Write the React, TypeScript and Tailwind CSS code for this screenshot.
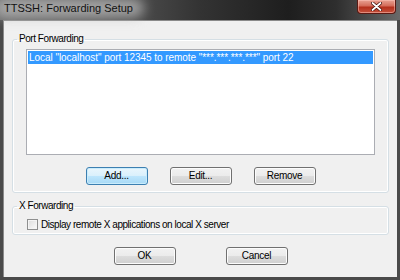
import React from "react";

const font = "font-['Liberation_Sans',Arial,sans-serif]";

function Button({ label, primary }: { label: string; primary?: boolean }) {
  return (
    <button
      className={
        "h-[18px] w-[62px] rounded-[3px] border text-[10px] leading-none tracking-[-0.3px] text-black " +
        (primary
          ? "border-[#3c7fb1] bg-[linear-gradient(#eaf6fd_0%,#d9f0fc_50%,#bee6fd_50%,#a7d9f5_100%)] shadow-[inset_0_0_0_1px_#c9ecfc]"
          : "border-[#707070] bg-[linear-gradient(#f2f2f2_0%,#ebebeb_50%,#dddddd_50%,#cfcfcf_100%)] shadow-[inset_0_0_0_1px_#fcfcfc]")
      }
    >
      {label}
    </button>
  );
}

function Group({
  title,
  className,
  children,
}: {
  title: string;
  className?: string;
  children: React.ReactNode;
}) {
  return (
    <fieldset
      className={
        "mx-[8px] rounded-[3px] border border-[#d5dfe5] px-0 shadow-[inset_0_0_0_1px_#ffffff] " +
        (className ?? "")
      }
    >
      <legend className="ml-[4px] px-[2px] text-[10px] leading-[12px] tracking-[-0.45px] text-black">
        {title}
      </legend>
      {children}
    </fieldset>
  );
}

export default function App() {
  return (
    <div
      className={
        "flex h-[280px] w-[400px] flex-col overflow-hidden bg-[#4a4a4a] " + font
      }
    >
      {/* title bar */}
      <div className="relative flex h-[20px] shrink-0 items-start bg-[linear-gradient(90deg,#6c6c6c_0%,#5a5a5a_25%,#333333_50%,#1e1e1e_72%,#2e2e2e_84%,#6a6a6a_100%)]">
        <div className="absolute left-[-6px] top-[-2px] h-[20px] w-[150px] rounded-full bg-[#c0c0c0] opacity-70 blur-[6px]" />
        <span className="relative ml-[4px] mt-[2px] text-[11px] leading-[13px] text-[#111]">
          TTSSH: Forwarding Setup
        </span>
        <div className="absolute right-[4px] top-0 flex h-[14px] w-[39px] items-center justify-center rounded-b-[4px] border border-t-0 border-[#5a1a14] bg-[linear-gradient(#e8a293_0%,#d46c5a_45%,#b4301c_55%,#c5513d_100%)] shadow-[inset_0_0_0_1px_rgba(255,200,190,0.5)]">
          <svg width="11" height="9" viewBox="0 0 11 9">
            <path
              d="M1.5 1 L9.5 8 M9.5 1 L1.5 8"
              stroke="#3a0a05"
              strokeWidth="3.2"
              strokeLinecap="round"
            />
            <path
              d="M1.5 1 L9.5 8 M9.5 1 L1.5 8"
              stroke="#ffffff"
              strokeWidth="1.8"
              strokeLinecap="round"
            />
          </svg>
        </div>
      </div>

      <div className="flex flex-1">
        <div className="w-[3px] bg-[#4a4a4a]" />
        {/* client area */}
        <div className="flex flex-1 flex-col border-t border-l border-[#8a8a8a] bg-[#f0f0f0]">
          <Group title="Port Forwarding" className="mt-[12px] pb-[7px]">
            <div className="mx-[13px] mt-[4px] h-[106px] border border-[#abadb3] bg-white p-[1px]">
              <div className="h-[13px] bg-[#3399ff] pl-[1px] text-[10px] leading-[13px] tracking-[-0.05px] text-white">
                Local "localhost" port 12345 to remote "***.***.***.***" port 22
              </div>
            </div>
            <div className="mt-[12px] flex justify-center gap-[22px]">
              <Button label="Add..." primary />
              <Button label="Edit..." />
              <Button label="Remove" />
            </div>
          </Group>

          <Group title="X Forwarding" className="mt-[7px] pb-[4px]">
            <div className="ml-[14px] mt-[6px] flex h-[12px] items-center gap-[3px] text-[10px] tracking-[-0.45px] text-black">
              <div className="h-[11px] w-[11px] border border-[#8e8f8f] bg-[linear-gradient(135deg,#dcdcdc,#fbfbfb)] shadow-[inset_0_0_0_1px_#f4f4f4]" />
              <span>Display remote X applications on local X server</span>
            </div>
          </Group>

          <div className="mt-[12px] flex justify-center gap-[50px]">
            <Button label="OK" />
            <Button label="Cancel" />
          </div>
        </div>
        <div className="w-[3px] bg-[#4a4a4a]" />
      </div>
      <div className="h-[3px] shrink-0 bg-[#4a4a4a]" />
    </div>
  );
}
